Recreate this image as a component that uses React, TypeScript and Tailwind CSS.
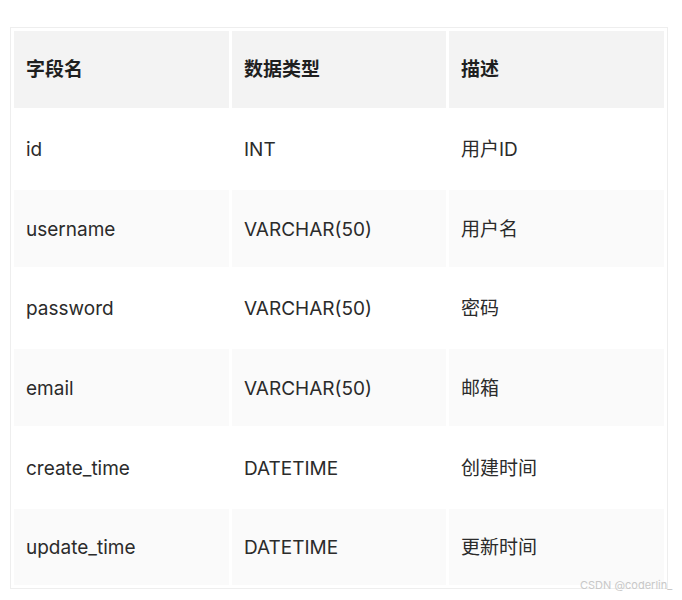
import React from 'react';

const rows = [
  ['id', 'INT', '用户ID'],
  ['username', 'VARCHAR(50)', '用户名'],
  ['password', 'VARCHAR(50)', '密码'],
  ['email', 'VARCHAR(50)', '邮箱'],
  ['create_time', 'DATETIME', '创建时间'],
  ['update_time', 'DATETIME', '更新时间'],
];

export default function App() {
  return (
    <div
      className="relative w-[682px] h-[600px] bg-white pt-[27px] pl-[10px]"
      style={{ fontFamily: 'Inter, "Noto Sans CJK SC", sans-serif' }}
    >
      <table className="w-[658px] border border-[#eeeeee] border-separate border-spacing-[3px] table-fixed">
        <thead>
          <tr className="h-[76.6px]">
            <th className="w-[215px] bg-[#f3f3f3] pl-3 pt-[2px] text-left text-[19px] font-bold text-[#1f1f1f]">字段名</th>
            <th className="w-[214px] bg-[#f3f3f3] pl-3 pt-[2px] text-left text-[19px] font-bold text-[#1f1f1f]">数据类型</th>
            <th className="w-[215px] bg-[#f3f3f3] pl-3 pt-[2px] text-left text-[19px] font-bold text-[#1f1f1f]">描述</th>
          </tr>
        </thead>
        <tbody>
          {rows.map((r, i) => (
            <tr key={r[0]} className="h-[76.6px]">
              {r.map((c) => (
                <td
                  key={c}
                  className={`pl-3 pt-[3px] text-[19px] text-[#2b2b2b] ${i % 2 === 1 ? 'bg-[#fafafa]' : 'bg-white'}`}
                >
                  {c}
                </td>
              ))}
            </tr>
          ))}
        </tbody>
      </table>
      <span className="absolute left-[580px] top-[580px] text-[11px] text-[#c8c8c8] leading-none">
        CSDN @coderlin_
      </span>
    </div>
  );
}
